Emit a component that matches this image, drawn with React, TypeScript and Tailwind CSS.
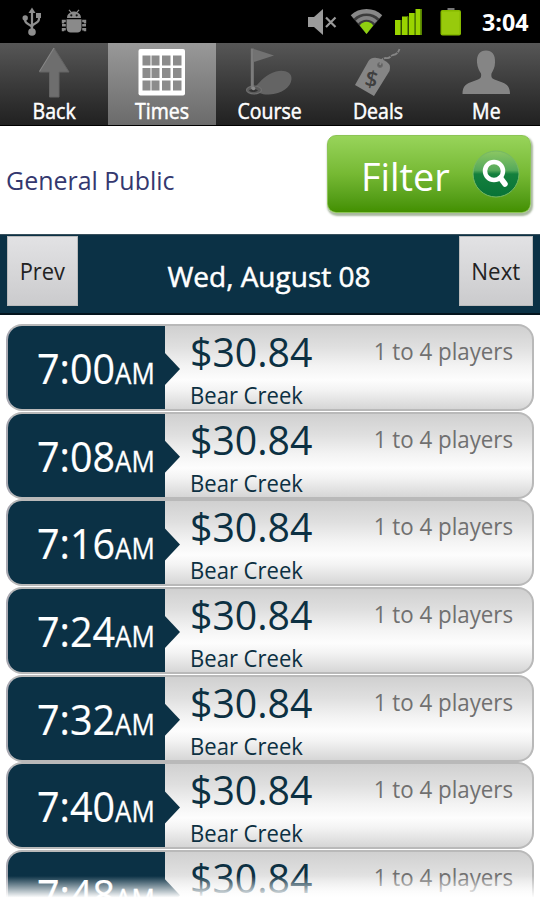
import React from 'react';

const times = ['7:00', '7:08', '7:16', '7:24', '7:32', '7:40', '7:48'];

const UsbIcon = () => (
  <svg width="20" height="30" viewBox="0 0 20 30" className="block" fill="none" stroke="#8e8e8e" strokeWidth="2.2">
    <path d="M10 4v20M3 11v2c0 5 7 4 7 8M17 8v4c0 5-7 4-7 8" />
    <circle cx="10" cy="25" r="3.8" fill="#8e8e8e" stroke="none" />
    <circle cx="3.2" cy="11" r="2.7" fill="#8e8e8e" stroke="none" />
    <path d="M14 6h5v5h-5z" fill="#8e8e8e" stroke="none" />
    <path d="M10 .5l3.500 5.500h-7z" fill="#8e8e8e" stroke="none" />
  </svg>
);

const DebugIcon = () => (
  <svg width="26" height="26" viewBox="0 0 26 26" className="block" fill="#8a8a8a">
    <path d="M6 9c0-3.500 2-5 3.600-5.600L7.500 1.300l.9-.9 2.300 2.500c1.500-.4 3.100-.4 4.600 0l2.300-2.500.9.900-2.100 2.100C18 4 20 5.500 20 9z" />
    <path d="M5.500 10.200h15V19c0 3-2 4.500-4 4.500h-7c-2 0-4-1.500-4-4.500z" />
    <path d="M4.800 12H2v2.500M4.800 16.200H1M4.800 20.200H2v2M21.200 12H24v2.500M21.200 16.200H25M21.200 20.200H24v2" fill="none" stroke="#8a8a8a" strokeWidth="2.400" />
    <circle cx="10.300" cy="6.300" r="1.100" fill="#111" />
    <circle cx="15.700" cy="6.300" r="1.100" fill="#111" />
  </svg>
);

const MuteIcon = () => (
  <svg width="29" height="26" viewBox="0 0 29 26" className="block">
    <path d="M0 8h6l9-8v26l-9-8H0z" fill="#9b9b9b" />
    <path d="M18 8.500l9.500 9.500M27.500 8.500L18 18" stroke="#9b9b9b" strokeWidth="2.200" />
  </svg>
);

const WifiIcon = () => (
  <svg width="33" height="27" viewBox="0 0 33 27" className="block" fill="none">
    <path d="M1.500 8.500C10 .500 23 .500 31.500 8.500L16.500 26z" fill="#3c3c3c" />
    <path d="M2.300 8.800C10 1.500 23 1.500 30.700 8.800" stroke="#888" strokeWidth="4.500" />
    <path d="M7 14C12 8.500 21 8.500 26 14" stroke="#828282" strokeWidth="3.600" />
    <path d="M9.800 17.500C13 12.500 20 12.500 23.200 17.500L16.500 26z" fill="#8fd010" />
  </svg>
);

const SignalIcon = () => (
  <svg width="27" height="26" viewBox="0 0 27 26" className="block" fill="#9ad400">
    <path d="M0 11h6v15H0zM7 7.500h6V26H7zM14 4h6v22h-6zM20.500 0h6v26h-6z" />
    <path d="M5 11h1.500v15H5zM12 7.500h1.500V26H12zM19 4h1.500v22H19zM25 0h1.500v26H25z" fill="#629500" />
  </svg>
);

const BatteryIcon = () => (
  <svg width="22" height="28" viewBox="0 0 22 28" className="block">
    <path d="M7.500 0h7v3h-7z" fill="#777" />
    <rect x="0.500" y="2" width="20.500" height="25.500" rx="2" fill="#86b900" />
    <rect x="2" y="3.500" width="17.500" height="22.500" fill="#98ca0c" />
  </svg>
);

const BackIcon = () => (
  <svg width="108" height="60" viewBox="0 0 108 60" className="block">
    <path d="M54 5L69 29H59V54H49.500V29H39.500z" fill="#6e6e6e" stroke="#646464" />
    <path d="M54 5L39.500 28.500" stroke="#858585" strokeWidth="1.200" />
  </svg>
);

const TimesIcon = () => (
  <svg width="108" height="60" viewBox="0 0 108 60" className="block">
    <rect x="30.500" y="6" width="46.500" height="46.500" rx="2" fill="#fff" />
    <g fill="#8c8c8c">
      <path d="M34.500 12.500H42v10h-7.500zM44 12.500h7.500v10H44zM54 12.500h8.500v10H54zM65 12.500h8.500v10H65z" />
      <path d="M34.500 25H42v10h-7.500zM44 25h7.500v10H44zM54 25h8.500v10H54zM65 25h8.500v10H65z" />
      <path d="M34.500 37.500H42v10h-7.500zM44 37.500h7.500v10H44zM54 37.500h8.500v10H54zM65 37.500h8.500v10H65z" />
    </g>
    <path d="M42 12.500h2v10h-2zM42 25h2v10h-2zM42 37.500h2v10h-2z" fill="#c4c4c4" />
  </svg>
);

const CourseIcon = () => (
  <svg width="108" height="60" viewBox="0 0 108 60" className="block">
    <path d="M39 44C45 38 50 31 60 28.500 68 26.500 76 29 75.500 36 75 44 66 51 53 51.500 46 52 43 49 39 48.500z" fill="#646464" />
    <ellipse cx="38" cy="47" rx="7.500" ry="4" fill="#5a5a5a" stroke="#707070" strokeWidth="1.200" />
    <path d="M34.800 5.500h3V47h-3z" fill="#7c7c7c" />
    <path d="M37.800 6L58 12.500 37.800 19z" fill="#727272" />
    <path d="M33 47.500c2-2 7-2 9 0-2 2-7 2-9 0z" fill="#333" />
    <circle cx="37.500" cy="45.500" r="1.800" fill="#8a8a8a" />
  </svg>
);

const DealsIcon = () => (
  <svg width="108" height="60" viewBox="0 0 108 60" className="block">
    <path d="M44.500 18c2-3 5-3.500 8-3 5 .500 10 3 12.500 6 1.500 2 1 4.500.500 7L50 53 31 42z" fill="#858585" />
    <circle cx="56" cy="22" r="2.500" fill="#606060" stroke="#6c6c6c" />
    <path d="M56 22c1-4 2-7 6-7 4 1 4-2 7-3 3 0 5-2 6.500-6" fill="none" stroke="#858585" strokeWidth="1.800" strokeDasharray="7 1" />
    <text x="47.500" y="44" textAnchor="middle" transform="rotate(12 48 36)" fontFamily="Open Sans" fontSize="22" fontWeight="600" fill="#3f3f3f">$</text>
  </svg>
);

const MeIcon = () => (
  <svg width="108" height="60" viewBox="0 0 108 60" className="block" fill="#858585">
    <path d="M54 7.500c6 0 9.500 4 9 12 0 5-2 8-3.500 11-.500 3 0 5 3 6l8 3c5 2 7.500 5 7.500 11.500H30.500c0-6.500 2.500-9.500 7.500-11.500l8-3c3-1 3.500-3 3-6-2-3-3.500-6-4-11-.500-8 3-12 9-12z" />
  </svg>
);

const tabs = [
  { label: 'Back', icon: BackIcon },
  { label: 'Times', icon: TimesIcon, active: true },
  { label: 'Course', icon: CourseIcon },
  { label: 'Deals', icon: DealsIcon },
  { label: 'Me', icon: MeIcon },
];

const SearchBadge = () => (
  <svg width="48" height="48" viewBox="0 0 48 48" className="block">
    <defs>
      <linearGradient id="badge" x1="0" y1="0" x2="0" y2="1">
        <stop offset="0" stopColor="#8cc763" />
        <stop offset="0.420" stopColor="#55a95b" />
        <stop offset="0.500" stopColor="#14803d" />
        <stop offset="1" stopColor="#087337" />
      </linearGradient>
    </defs>
    <circle cx="24" cy="24" r="23" fill="url(#badge)" stroke="#77b865" strokeWidth="1" />
    <circle cx="22" cy="21" r="9" fill="none" stroke="#fff" strokeWidth="4.500" />
    <path d="M28.500 28l4.500 6" stroke="#fff" strokeWidth="5.500" strokeLinecap="round" />
  </svg>
);

const TimeRow = ({ time }: { time: string }) => (
  <div className="h-[87.7px] px-1.5 whitespace-nowrap">
    <div className="flex h-[87px] w-[528px] overflow-hidden rounded-[16px] border-2 border-[#b9b9b9] border-l-[#a9a9b2] bg-[linear-gradient(180deg,#d0d0d0_0%,#dfdfdf_25%,#f3f3f3_48%,#fdfdfd_65%,#f3f3f3_77%,#d6d6d6_100%)]">
      <div className="relative h-full w-[157px] shrink-0 bg-[#0b3145] pt-[22px] pl-[29px] text-white">
        <div className="flex items-baseline leading-none">
          <span className="w-[78px] origin-left scale-x-[0.95] text-[41.5px] leading-none [-webkit-text-stroke:0.2px]">{time}</span>
          <span className="origin-left scale-x-[0.91] text-[28.5px] leading-none [-webkit-text-stroke:0.3px]">AM</span>
        </div>
        <div className="absolute top-[26px] left-[156px] h-[34px] w-[16px] bg-[#0b3145] [clip-path:polygon(0_0,100%_50%,0_100%)]" />
      </div>
      <div className="flex flex-1 justify-between pl-[25px] pr-[19px]">
        <div className="pt-[6px] text-[#0c3042]">
          <div className="origin-left scale-x-[0.98] text-[40px] leading-none">$30.84</div>
          <div className="mt-[11px] origin-left scale-x-[0.9] text-[24.5px] leading-none">Bear Creek</div>
        </div>
        <div className="origin-right scale-x-[0.91] pt-[13px] text-[24.5px] leading-none text-[#707070]">1 to 4 players</div>
      </div>
    </div>
  </div>
);

const App = () => {
  return (
    <div className="relative flex h-[900px] w-[540px] flex-col overflow-hidden bg-white font-['Open_Sans','Noto_Sans',sans-serif]">
      <header className="flex h-[43px] shrink-0 items-center justify-between bg-black pl-[22px] pr-[9px]">
        <div className="flex items-center gap-[19px]">
          <UsbIcon />
          <DebugIcon />
        </div>
        <div className="flex items-center">
          <MuteIcon />
          <div className="ml-[13px]"><WifiIcon /></div>
          <div className="ml-[12px]"><SignalIcon /></div>
          <div className="ml-[18px]"><BatteryIcon /></div>
          <span className="mt-[3px] ml-[20px] w-[49px] origin-left scale-x-[0.99] text-[23.5px] leading-none font-bold text-white">3:04</span>
        </div>
      </header>

      <nav className="flex h-[83px] shrink-0 border-b border-black">
        {tabs.map(({ label, icon: Icon, active }) => (
          <div
            key={label}
            className={
              active
                ? 'flex w-[108px] flex-col items-center bg-gradient-to-b from-[#999] to-[#6b6b6b] text-white'
                : 'flex w-[108px] flex-col items-center bg-gradient-to-b from-[#575757] to-[#212121] text-white'
            }
          >
            <Icon />
            <span className="-mt-[2px] scale-x-[0.93] text-[21px] leading-none [-webkit-text-stroke:0.5px]">{label}</span>
          </div>
        ))}
      </nav>

      <section className="flex h-[108px] shrink-0 items-start justify-between pl-[6px] pr-[9px]">
        <span className="mt-[41px] origin-left scale-x-[0.96] text-[26px] leading-none text-[#34386f]">General Public</span>
        <button className="mt-[9px] flex h-[78px] w-[204px] items-start rounded-[9px] border border-[#8cc455] bg-gradient-to-b from-[#98d45a] via-[#76b933] to-[#439000] shadow-[1px_2px_2px_1px_#a9b89f]">
          <span className="mt-[20px] ml-[33px] w-[111px] origin-left scale-x-[0.97] text-left text-[39px] leading-none text-white">Filter</span>
          <span className="mt-[14px]"><SearchBadge /></span>
        </button>
      </section>

      <section className="flex h-[81px] shrink-0 items-start justify-between border-t border-b-2 border-t-[#38505c] border-b-[#04141d] bg-[#0b3145] px-[7px] pt-px whitespace-nowrap">
        <button className="flex h-[70px] w-[71px] justify-center border border-[#bbb] bg-gradient-to-b from-[#e2e2e4] to-[#cbcbcd] pt-[23px] text-[#222]">
          <span className="scale-x-[0.93] text-[23.5px] leading-none">Prev</span>
        </button>
        <span className="mt-[26px] ml-px scale-x-[1] text-[28px] leading-none text-white [-webkit-text-stroke:0.5px]">Wed, August 08</span>
        <button className="flex h-[70px] w-[74px] justify-center border border-[#bbb] bg-gradient-to-b from-[#e2e2e4] to-[#cbcbcd] pt-[23px] text-[#222]">
          <span className="scale-x-[0.95] text-[23.5px] leading-none">Next</span>
        </button>
      </section>

      <main className="pt-[9px]">
        {times.map((time) => (
          <TimeRow key={time} time={time} />
        ))}
      </main>

      {/* list fades out at the bottom edge */}
      <div className="absolute inset-x-0 bottom-0 h-[24px] bg-gradient-to-b from-transparent to-white to-90%" />
    </div>
  );
};

export default App;
